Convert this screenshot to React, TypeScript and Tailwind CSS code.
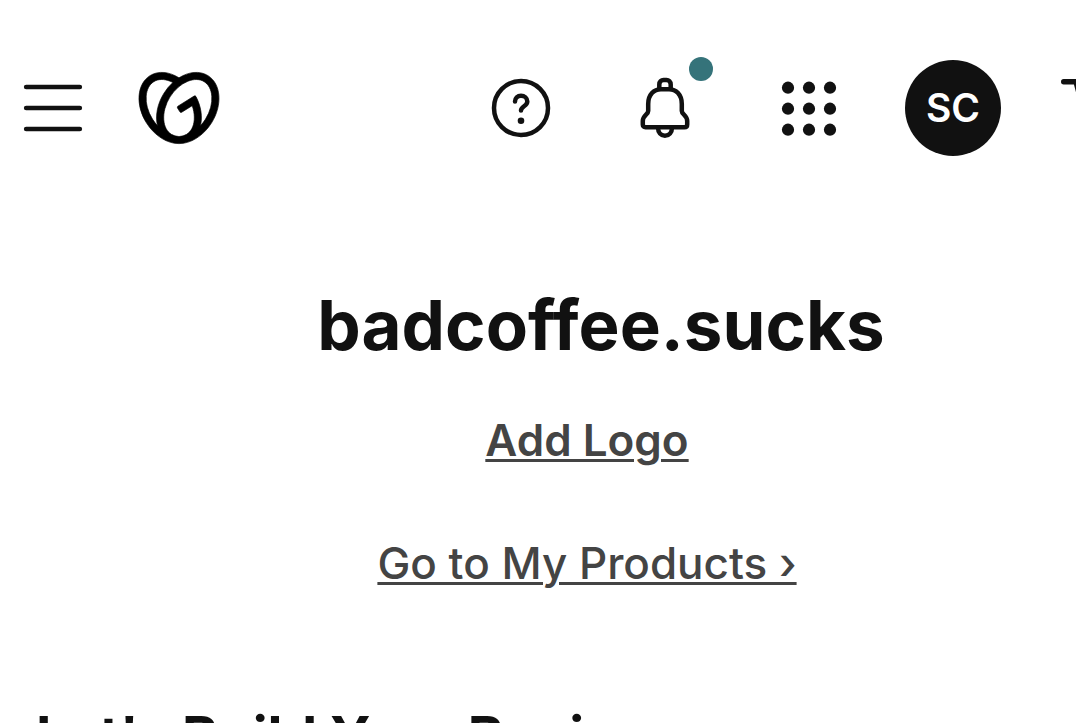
import { SiGodaddy } from "react-icons/si";

function HelpIcon() {
  return (
    <svg viewBox="0 0 72 72" className="size-18" fill="none" stroke="currentColor" strokeWidth="4.5" strokeLinecap="round" aria-hidden="true">
      <circle cx="36" cy="36" r="27" />
      <path d="M30 29.6C30 26 32.6 23.7 36 23.7S42.3 26.2 42.3 29.4C42.3 34.2 36 34.2 36 38.6" />
      <circle cx="36" cy="48.8" r="3.3" fill="currentColor" stroke="none" />
    </svg>
  );
}

function BellIcon() {
  return (
    <svg viewBox="0 0 72 72" className="size-18" fill="none" stroke="currentColor" strokeWidth="4.5" strokeLinejoin="round" aria-hidden="true">
      <path d="M30.3 17V12.5C30.3 9.6 32.3 8.1 34.5 8.1H37.5C39.7 8.1 41.7 9.6 41.7 12.5V17" />
      <path d="M19.2 32C19.2 22.5 25 17.2 32 17.2H40C47 17.2 52.8 22.5 52.8 32V39C52.8 42.5 58.2 43 58.2 49V52.5C58.2 54.2 57.3 55.2 55.5 55.2H16.5C14.7 55.2 13.8 54.2 13.8 52.5V49C13.8 43 19.2 42.5 19.2 39Z" />
      <path d="M29 55.5C29 60.5 32 63.7 36 63.7S43 60.5 43 55.5" />
    </svg>
  );
}

const dots = [15, 36, 57];

function AppsIcon() {
  return (
    <svg viewBox="0 0 72 72" className="size-18" fill="currentColor" aria-hidden="true">
      {dots.map((y) => dots.map((x) => <circle key={`${x}-${y}`} cx={x} cy={y + 0.7} r="6.1" />))}
    </svg>
  );
}

function MenuIcon() {
  return (
    <svg viewBox="0 0 72 72" className="size-18" stroke="currentColor" strokeWidth="4.7" strokeLinecap="round" aria-hidden="true">
      <path d="M9.2 15H62.8M9.2 36H62.8M9.2 57H62.8" />
    </svg>
  );
}

function CartIcon() {
  return (
    <svg viewBox="0 0 72 72" className="size-18" fill="none" stroke="currentColor" strokeWidth="5.4" strokeLinecap="round" strokeLinejoin="round" aria-hidden="true">
      <path d="M2.7 9.7H15L24 44H58L66 19H18" />
      <circle cx="29" cy="58" r="4" />
      <circle cx="53" cy="58" r="4" />
    </svg>
  );
}

export default function App() {
  return (
    <div className="h-screen overflow-hidden bg-white font-['Inter',sans-serif] text-[#111111]">
      <header className="-mr-[57px] flex h-54 items-center pl-[17px]">
        <button type="button" aria-label="Menu"><MenuIcon /></button>
        <a href="#home" aria-label="Home" className="ml-[50px] text-black">
          <SiGodaddy className="size-20 overflow-visible stroke-black [stroke-width:0.2px]" />
        </a>
        <nav aria-label="Account" className="ml-auto flex items-center gap-18">
          <button type="button" aria-label="Help"><HelpIcon /></button>
          <button type="button" aria-label="Notifications" className="relative">
            <BellIcon />
            <span className="absolute -top-[15px] -right-3 size-6 rounded-full bg-[#35737a]" />
          </button>
          <button type="button" aria-label="Apps"><AppsIcon /></button>
          <button type="button" aria-label="Account" className="-mx-3 flex size-24 items-center justify-center rounded-full bg-[#111111] text-[39px] font-semibold text-white">
            SC
          </button>
          <button type="button" aria-label="Cart"><CartIcon /></button>
        </nav>
      </header>
      <main>
        <section className="flex flex-col items-center pt-16 pl-[98px]">
          <h1 className="ml-7 text-[69px] leading-[90px] font-bold">badcoffee.sucks</h1>
          <a href="#logo" className="mt-[34px] text-[44px] leading-[72px] font-semibold text-[#444444] underline decoration-3 underline-offset-3">Add Logo</a>
          <a href="#products" className="mt-[51px] text-[44px] leading-[72px] font-medium text-[#444444] underline decoration-3 underline-offset-3">Go to My Products ›</a>
        </section>
        <h2 className="mt-[101px] pl-9 text-[55px] leading-[72px] font-bold whitespace-nowrap">Let's Build Your Business</h2>
      </main>
    </div>
  );
}
